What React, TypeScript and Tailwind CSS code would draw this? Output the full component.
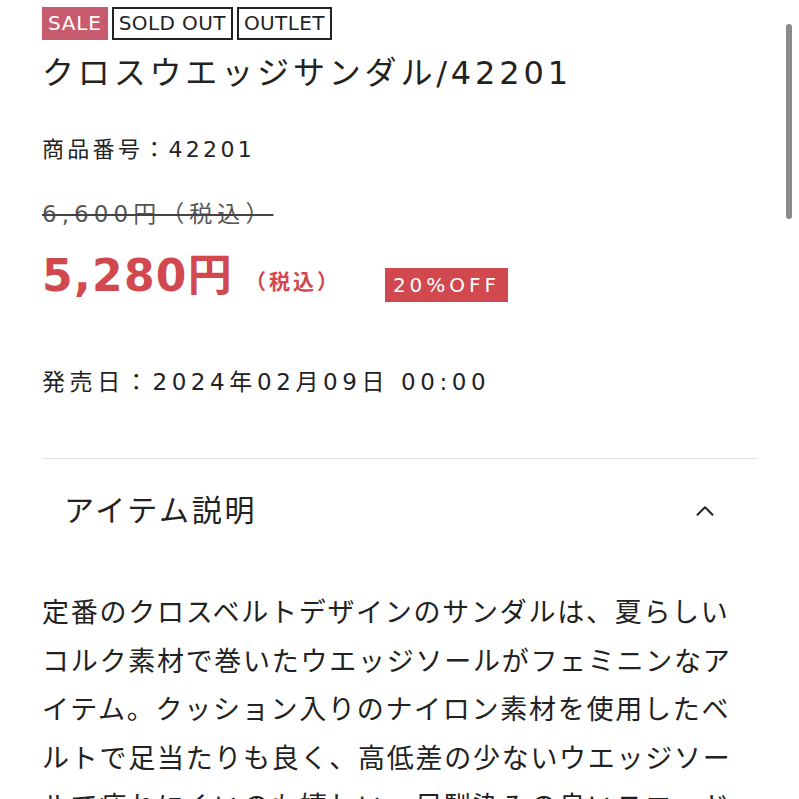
import { ChevronUp } from 'lucide-react';

const font = { fontFamily: '"DejaVu Sans", "Noto Sans CJK JP", sans-serif' };

export default function App() {
  return (
    <div className="relative h-screen overflow-hidden bg-white text-[#222]" style={font}>
      <div className="px-[42px] pt-[7px]">
        {/* Labels */}
        <div className="flex items-center gap-[4px]">
          <span className="bg-[#c95b6e] text-white text-[20px] leading-[33px] px-[6px] tracking-[0.04em]">SALE</span>
          <span className="border-2 border-[#222] text-[20px] leading-[29px] px-[5px] tracking-[0.02em]">SOLD OUT</span>
          <span className="border-2 border-[#222] text-[20px] leading-[29px] px-[5px] tracking-[0.02em]">OUTLET</span>
        </div>

        {/* Title */}
        <h1 className="mt-[12px] text-[32px] leading-[42px] tracking-[0.12em] font-normal">
          クロスウエッジサンダル/42201
        </h1>

        <p className="mt-[42px] text-[22px] leading-[28px] tracking-[0.15em]">商品番号：42201</p>

        {/* Prices */}
        <p className="mt-[36px] text-[23px] leading-[28px] tracking-[0.22em] text-[#555] line-through decoration-[#444] decoration-2">
          6,600円（税込）
        </p>
        <div className="mt-[22px] flex items-end">
          <span className="text-[44px] leading-[52px] font-bold text-[#d1484f] tracking-[0.03em]">5,280円</span>
          <span className="ml-[12px] mb-[6px] text-[21px] leading-[28px] font-bold text-[#d1484f] tracking-[0.14em]">（税込）</span>
          <span className="ml-[44px] mb-[0px] bg-[#d1484f] text-white text-[20px] leading-[34px] px-[8px] tracking-[0.2em]">20%OFF</span>
        </div>

        <p className="mt-[66px] text-[23px] leading-[28px] tracking-[0.2em]">発売日：2024年02月09日 00:00</p>

        <div className="mt-[62px] h-px bg-[#e2e2e2] w-[716px]" />

        {/* Accordion */}
        <div className="flex items-center justify-between w-[716px] pl-[22px] pr-[38px] pt-[32px]">
          <h2 className="text-[30px] leading-[40px] tracking-[0.09em]">アイテム説明</h2>
          <ChevronUp className="w-[30px] h-[30px]" strokeWidth={1.6} />
        </div>

        <p className="mt-[58px] w-[702px] text-[27px] leading-[48.5px] tracking-[0.064em]">
          定番のクロスベルトデザインのサンダルは、夏らしいコルク素材で巻いたウエッジソールがフェミニンなアイテム。クッション入りのナイロン素材を使用したベルトで足当たりも良く、高低差の少ないウエッジソールで疲れにくいのも嬉しい。足馴染みの良いスエード調素材を使用しています。
        </p>
      </div>

      {/* scrollbar */}
      <div className="absolute left-[786px] top-[24px] w-[6px] h-[195px] rounded-full bg-[#8a8a8a]" />
    </div>
  );
}
